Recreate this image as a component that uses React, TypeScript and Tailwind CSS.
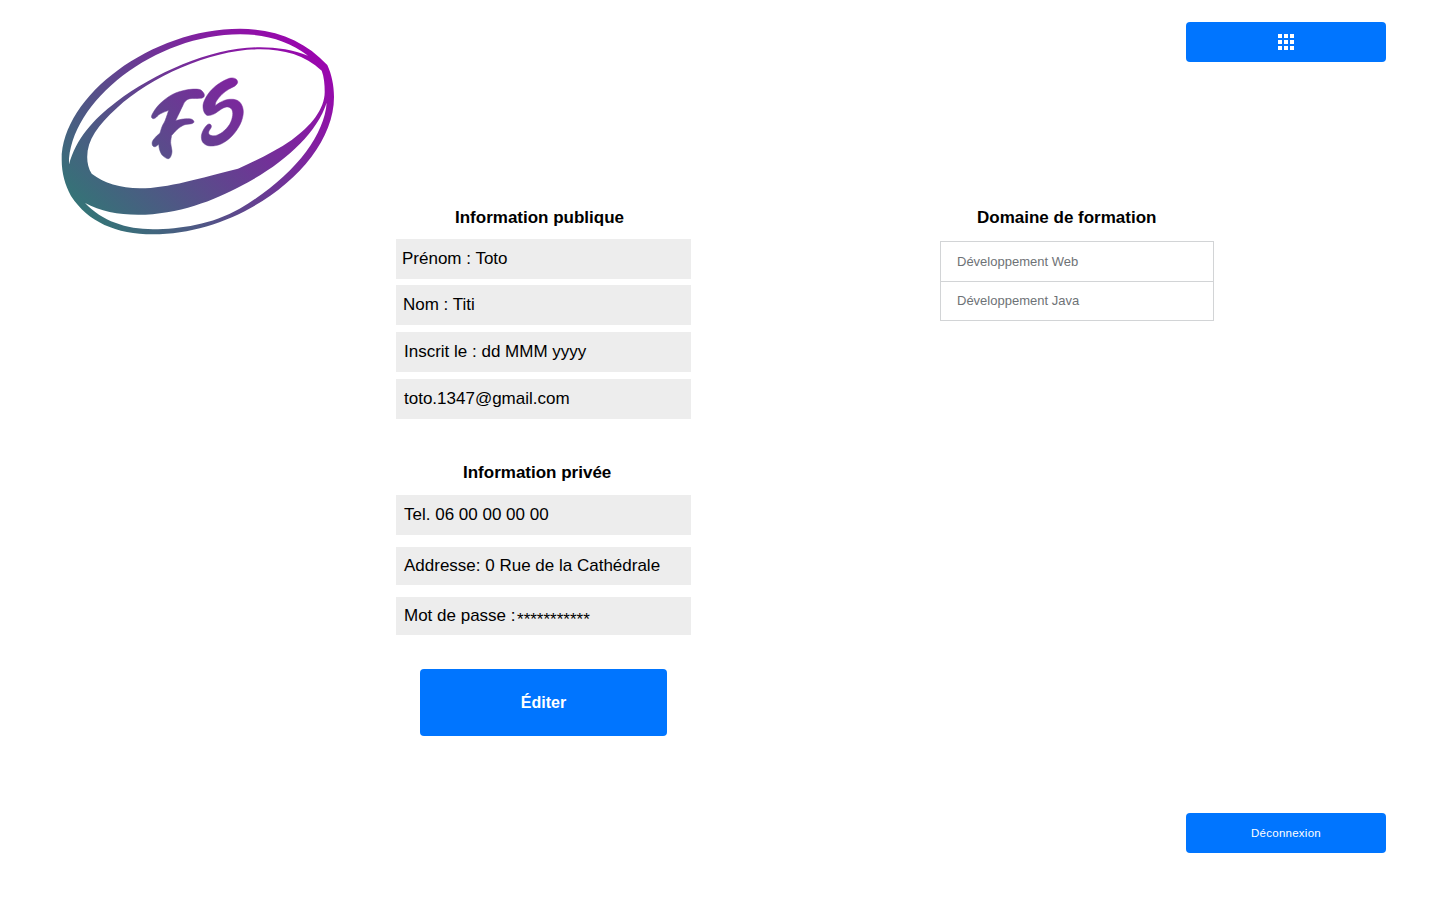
type Point = [number, number];

// Builds one closed outline from smooth runs of points; runs meet at sharp corners.
function outline(...runs: Point[][]): string {
  let d = `M${runs[0][0].join(" ")}`;
  for (const pts of runs) {
    for (let i = 0; i < pts.length - 1; i++) {
      const a = pts[Math.max(i - 1, 0)];
      const b = pts[i];
      const c = pts[i + 1];
      const e = pts[Math.min(i + 2, pts.length - 1)];
      d += `C${b[0] + (c[0] - a[0]) / 6} ${b[1] + (c[1] - a[1]) / 6} ${c[0] - (e[0] - b[0]) / 6} ${c[1] - (e[1] - b[1]) / 6} ${c[0]} ${c[1]}`;
    }
  }
  return d + "Z";
}

const rings = [
  "M61.7 160C61.7 95.5 152.3 28.8 240 28.8C276 28.8 305 41 327.3 65C331.5 74 334 85 334 97C334 164.6 242 234.3 153 234.3C116 234.3 88 222 71 196C65 185 61.7 173 61.7 160Z",
  "M69 164.5C69 101 156 34.2 240 34.2C266 34.2 289 41 308 55.8C294 50 277 47.3 260 47.3C212 47.3 155.5 72.5 116.2 102C92.5 120 76 139 69 164.5Z",
  "M91.7 173.8C88.5 169 87.2 163 87.2 157C87.2 140 98 125 116.9 108C152 76 212 49.3 260 49.3C284 49.3 305 55 321.7 70.7C324 77 324.7 84 324.7 92C324.7 109 311 126 291.7 140C275 151.5 257 160 238 168.7C200 178 168 188.3 140 188.3C120 188.3 104 183 91.7 173.8Z",
  "M326.7 102.7C324 137 293 177 240 208.5C212 224.5 180 229.2 153 229.2C126 229.2 102 221 85 203C100 211 118 214.8 138 214.8C178 214.8 215 200 240 186.5C282 165 316 135 326.7 102.7Z",
].join("");

const letterF = outline(
  [[86, 121], [60, 132], [46, 144], [37, 145], [36, 134], [58, 103], [96, 74], [138, 60], [176, 58], [191, 69], [192, 80], [181, 85], [150, 86], [136, 94], [128, 108], [107, 152]],
  [[107, 152], [130, 147], [153, 147], [162, 155], [155, 161], [132, 165], [111, 179], [95, 196]],
  [[95, 196], [92, 218], [96, 243], [92, 260], [83, 266], [67, 256], [59, 240], [56, 223]],
  [[56, 223], [46, 230], [38, 227], [37, 215], [47, 201], [60, 189]],
  [[60, 189], [66, 170], [76, 150], [86, 121]],
);

const letterS = outline(
  [[226, 107], [229, 94], [246, 73], [266, 58], [286, 47], [293, 36], [286, 26], [268, 25], [235, 42], [208, 67], [191, 97], [190, 119], [198, 134], [210, 136], [226, 130], [246, 116], [263, 111], [275, 118], [278, 136], [269, 163], [248, 186], [226, 197], [210, 195], [206, 186], [214, 171], [211, 163], [202, 164], [190, 180], [184, 200], [190, 219], [210, 228], [243, 222], [276, 198], [301, 162], [310, 127], [303, 101], [286, 89], [260, 89], [241, 97], [226, 107]],
);

function Logo() {
  return (
    <svg className="h-[208px] w-[276px]" viewBox="60 28 276 208" role="img" aria-label="FS">
      <defs>
        <linearGradient id="brand" gradientUnits="userSpaceOnUse" x1="102" y1="227" x2="295.5" y2="33.5">
          <stop offset="0" stopColor="#357377" />
          <stop offset="1" stopColor="#9b05ae" />
        </linearGradient>
        <linearGradient id="brandLetters" gradientUnits="userSpaceOnUse" x1="-114" y1="471" x2="466.5" y2="-109.5">
          <stop offset="0" stopColor="#357377" />
          <stop offset="1" stopColor="#9b05ae" />
        </linearGradient>
      </defs>
      <path d={rings} fill="url(#brand)" fillRule="evenodd" />
      <g
        transform="translate(140 70) scale(0.33333)"
        fill="url(#brandLetters)"
        stroke="url(#brandLetters)"
        strokeWidth="1.5"
        strokeLinejoin="round"
      >
        <path d={letterF} />
        <path d={letterS} />
      </g>
    </svg>
  );
}

function GridIcon() {
  return (
    <svg className="size-4" viewBox="0 0 16 16" fill="#fff" shapeRendering="crispEdges">
      {[0, 6, 12].map((y) => [0, 6, 12].map((x) => <rect key={`${x}-${y}`} x={x} y={y} width="4" height="4" />))}
    </svg>
  );
}

export default function App() {
  return (
    <div className="flex h-[900px] w-[1440px] overflow-hidden bg-white font-['Liberation_Sans',Arial,sans-serif] text-[17px] leading-5 text-black">
      <aside className="w-[396px] shrink-0 pt-7 pl-[60px]">
        <Logo />
      </aside>

      <main className="w-[295px] shrink-0 pt-52">
        <h2 className="pl-[59px] font-bold">Information publique</h2>
        <div className="mt-[11px] flex h-10 items-center bg-[#ededed] pl-1.5">Prénom : Toto</div>
        <div className="mt-1.5 flex h-10 items-center bg-[#ededed] pl-[7px]">Nom : Titi</div>
        <div className="mt-[7px] flex h-10 items-center bg-[#ededed] pl-2">Inscrit le : dd MMM yyyy</div>
        <div className="mt-[7px] flex h-10 items-center bg-[#ededed] pl-2">toto.1347@gmail.com</div>

        <h2 className="mt-11 pl-[67px] font-bold">Information privée</h2>
        <div className="mt-3 flex h-10 items-center bg-[#ededed] pl-2">Tel. 06 00 00 00 00</div>
        <div className="mt-3 flex h-[38px] items-center bg-[#ededed] pl-2">Addresse: 0 Rue de la Cathédrale</div>
        <div className="mt-3 flex h-[38px] items-center bg-[#ededed] pl-2">
          <span>Mot de passe :</span>
          <span className="pt-2 pl-[1.5px]">***********</span>
        </div>

        <button className="mt-[34px] ml-6 flex h-[67px] w-[247px] items-center justify-center rounded bg-[#0075ff] text-base font-bold text-white">
          Éditer
        </button>
      </main>

      <section className="ml-[249px] w-[246px] shrink-0 pt-52">
        <h2 className="pl-[37px] font-bold">Domaine de formation</h2>
        <ul className="mt-[13px] w-[274px] border border-[#d2d4d6] text-[13px] text-[#6e7276]">
          <li className="flex h-10 items-center border-b border-[#d2d4d6] pl-4">Développement Web</li>
          <li className="flex h-[38px] items-center pl-4">Développement Java</li>
        </ul>
      </section>

      <nav className="flex w-[200px] shrink-0 flex-col justify-between pt-[22px] pb-[47px]">
        <button aria-label="Menu" className="flex h-10 items-center justify-center rounded bg-[#0075ff]">
          <GridIcon />
        </button>
        <button className="flex h-10 items-center justify-center rounded bg-[#0075ff] text-[11.5px] tracking-[0.25px] text-white">
          Déconnexion
        </button>
      </nav>
    </div>
  );
}
